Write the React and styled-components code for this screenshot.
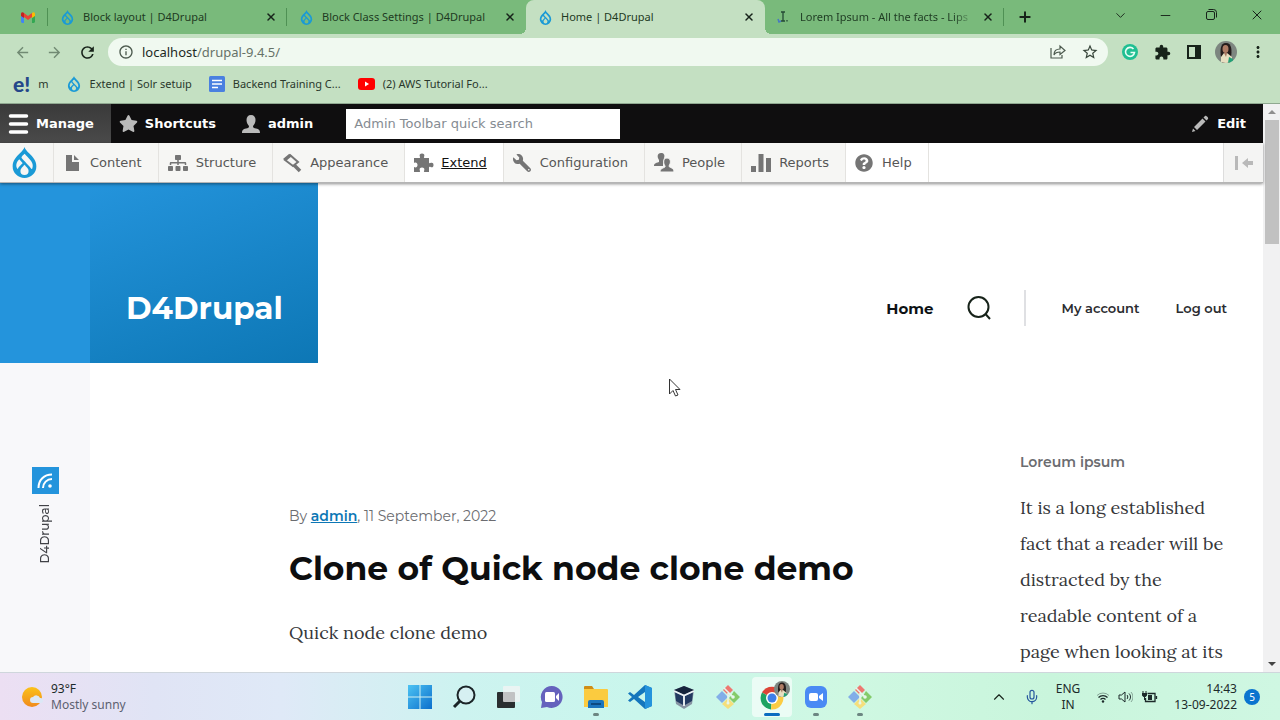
import React from 'react';
import styled, { createGlobalStyle } from 'styled-components';
import { FaStar, FaWrench, FaQuestionCircle, FaSitemap } from 'react-icons/fa';
import { LuX, LuPlus, LuChevronDown, LuMinus, LuChevronUp, LuMic } from 'react-icons/lu';
import { MdExtension, MdMoreVert, MdRefresh, MdArrowBack, MdArrowForward, MdInfoOutline, MdStarBorder } from 'react-icons/md';
import { SiDrupal } from 'react-icons/si';

const ui = '"Segoe UI", "Noto Sans", "Open Sans", sans-serif';
const admin = 'Verdana, "DejaVu Sans", sans-serif';
const heading = 'Metropolis, Montserrat, Inter, sans-serif';
const serif = 'Lora, "Liberation Serif", serif';

const GlobalStyle = createGlobalStyle`
  * {
    box-sizing: border-box;
  }

  body {
    margin: 0;
    background: #fff;
    font-family: ${ui};
  }

  button {
    padding: 0;
    border: 0;
    background: none;
    color: inherit;
    font: inherit;
    cursor: pointer;
  }

  a {
    color: inherit;
    text-decoration: none;
  }

  svg {
    display: block;
    flex-shrink: 0;
  }
`;

const Screen = styled.div`
  display: flex;
  flex-direction: column;
  height: 100vh;
  overflow: hidden;
`;

/* browser frame */

const TabStrip = styled.div`
  display: flex;
  align-items: stretch;
  height: 34px;
  background: #79ba7b;
  color: #1e3a22;
`;

const PinnedTab = styled.button`
  display: flex;
  align-items: center;
  justify-content: flex-end;
  width: 48px;
  padding-right: 12px;
  border-right: 1px solid #4f9154;
  margin: 8px 0;
`;

const Tab = styled.div`
  position: relative;
  display: flex;
  align-items: center;
  flex: 0 1 239px;
  min-width: 0;
  gap: 8px;
  padding: 0 10px 0 12px;
  border-radius: 8px 8px 0 0;
  background: ${(props) => (props.$active ? '#c4e0c2' : 'transparent')};

  &::before,
  &::after {
    content: '';
    display: ${(props) => (props.$active ? 'block' : 'none')};
    position: absolute;
    bottom: 0;
    width: 6px;
    height: 6px;
  }

  &::before {
    right: 100%;
    background: radial-gradient(circle at 0 0, transparent 6px, #c4e0c2 6px);
  }

  &::after {
    left: 100%;
    background: radial-gradient(circle at 100% 0, transparent 6px, #c4e0c2 6px);
  }
`;

const TabTitle = styled.button`
  flex: 1;
  min-width: 0;
  overflow: hidden;
  white-space: nowrap;
  text-align: left;
  font-size: 11px;
  line-height: 18px;
  ${(props) => props.$fade && 'mask-image: linear-gradient(90deg, #000 88%, transparent);'}
`;

const TabLine = styled.span`
  width: 1px;
  margin: 8px 0 8px -1px;
  background: #4f9154;
`;

const IconButton = styled.button`
  display: flex;
  align-items: center;
  justify-content: center;
  color: ${(props) => props.$color || '#17231a'};
`;

const NewTab = styled(IconButton)`
  width: 42px;
`;

const WindowButtons = styled.div`
  display: flex;
  align-items: center;
  gap: 30px;
  margin-left: auto;
  padding: 0 15px 4px 0;
`;

const AddressRow = styled.div`
  display: flex;
  align-items: center;
  height: 36px;
  padding: 0 13px 0 14px;
  background: #c4e0c2;
`;

const NavButtons = styled.div`
  display: flex;
  align-items: center;
  gap: 15px;
  margin-right: 11px;
`;

const AddressBar = styled.div`
  display: flex;
  align-items: center;
  flex: 1;
  height: 28px;
  gap: 8px;
  padding: 0 9px 0 10px;
  border-radius: 14px;
  background: #f0f9f0;
  color: #4c5a4e;
`;

const Url = styled.button`
  flex: 1;
  text-align: left;
  font-size: 13px;
  line-height: 20px;
  color: #667268;

  b {
    color: #1d2a1f;
    font-weight: 400;
  }
`;

const AddressActions = styled.div`
  display: flex;
  align-items: center;
  gap: 15px;
`;

const Extensions = styled.div`
  display: flex;
  align-items: center;
  gap: 14px;
  margin-left: 13px;

  button {
    width: 18px;
  }
`;

const Bookmarks = styled.nav`
  display: flex;
  align-items: center;
  gap: 17px;
  height: 34px;
  padding: 0 13px 6px;
  background: #c4e0c2;
  border-bottom: 1px solid #8fa890;
`;

const Bookmark = styled.a`
  display: flex;
  align-items: center;
  gap: 8px;
  font-size: 11px;
  line-height: 18px;
  color: #2a382c;
`;

const ELogo = styled.b`
  font-family: Lato, sans-serif;
  font-size: 21px;
  font-weight: 900;
  color: #24478a;
`;

/* page and scroll bar */

const Viewport = styled.div`
  display: flex;
  flex: 1;
  min-height: 0;
`;

const Page = styled.div`
  display: flex;
  flex-direction: column;
  flex: 1;
  min-width: 0;
  background: #fff;
`;

const Scrollbar = styled.div`
  display: flex;
  flex-direction: column;
  align-items: center;
  width: 17px;
  padding: 5px 0;
  background: #f1f1f2;
`;

const Thumb = styled.div`
  width: 14px;
  height: 124px;
  margin: 5px 0 auto;
  background: #c1c1c1;
`;

/* admin toolbar */

const AdminBar = styled.div`
  display: flex;
  align-items: center;
  height: 39px;
  flex-shrink: 0;
  background: #0f0e0f;
  color: #fff;
  font-family: ${admin};
`;

const AdminTab = styled.a`
  display: flex;
  align-items: center;
  gap: 7px;
  height: 39px;
  padding: 0 17px 0 8px;
  background: ${(props) => (props.$active ? 'linear-gradient(#3a3a3a, #4a4a4a)' : 'transparent')};
  font-size: 13px;
  font-weight: 700;
`;

const QuickSearch = styled.input`
  width: 274px;
  height: 30px;
  margin-left: 16px;
  padding: 0 8px;
  border: 0;
  border-radius: 0;
  background: #fff;
  font-family: ${admin};
  font-size: 13px;

  &::placeholder {
    color: #858b92;
  }
`;

const EditButton = styled.button`
  display: flex;
  align-items: center;
  gap: 8px;
  margin: 0 17px 0 auto;
  font-size: 13px;
  font-weight: 700;
`;

const Tray = styled.nav`
  position: relative;
  display: flex;
  height: 40px;
  flex-shrink: 0;
  border-bottom: 1px solid #b5b5b5;
  box-shadow: 0 1px 3px rgba(0, 0, 0, 0.45);
  background: #fff;
  font-family: ${admin};
`;

const TrayItem = styled.a`
  display: flex;
  align-items: center;
  gap: ${(props) => props.$gap || 9}px;
  padding: 0 16px 0 9px;
  border-right: 1px solid #e4e3e0;
  background: ${(props) => (props.$active ? '#fff' : '#f6f6f4')};
  color: ${(props) => (props.$current ? '#111' : '#565656')};
  text-decoration: ${(props) => (props.$current ? 'underline' : 'none')};
  font-size: 13px;

  svg {
    color: #757575;
  }
`;

const TrayHome = styled(TrayItem)`
  padding: 0 13px 0 9px;

  svg {
    color: #1a9ad6;
  }
`;

const TrayToggle = styled.button`
  display: flex;
  align-items: center;
  justify-content: center;
  width: 40px;
  margin-left: auto;
  border-left: 1px solid #ddd;
  background: #f4f4f3;
  color: #b9b9b9;
`;

/* site */

const Site = styled.div`
  display: flex;
  flex: 1;
  min-height: 0;
  overflow: hidden;
`;

const Social = styled.aside`
  display: flex;
  flex-direction: column;
  align-items: center;
  width: 90px;
  background: #f8f8fa;
`;

const SocialTop = styled.div`
  width: 100%;
  height: 180px;
  background: #2494dc;
`;

const Feed = styled.a`
  display: flex;
  align-items: center;
  justify-content: center;
  width: 27px;
  height: 27px;
  margin: 104px 0 10px;
  background: #2494dc;
  color: #fff;
`;

const SocialName = styled.span`
  writing-mode: vertical-rl;
  transform: rotate(180deg);
  font-family: ${heading};
  font-size: 12px;
  font-weight: 500;
  line-height: 16px;
  color: #414247;
`;

const Main = styled.main`
  flex: 1;
  min-width: 0;
`;

const SiteHeader = styled.header`
  display: flex;
  align-items: stretch;
  justify-content: space-between;
  height: 180px;
  padding-right: 36px;
  font-family: ${heading};
`;

const Branding = styled.a`
  display: flex;
  align-items: flex-end;
  width: 228px;
  padding: 0 0 35px 36px;
  background: linear-gradient(160deg, #2494dc, #0d77b5);
  color: #fff;
  font-size: 31px;
  font-weight: 700;
  line-height: 40px;
`;

const SiteNav = styled.nav`
  display: flex;
  align-items: center;
  align-self: flex-end;
  height: 36px;
  margin-bottom: 37px;
  font-size: 13px;
  font-weight: 600;
  color: #2b2c30;
`;

const NavLink = styled.a`
  margin-left: 36px;
`;

const HomeLink = styled.a`
  font-size: 15px;
  font-weight: 700;
  color: #0d1114;
`;

const SearchButton = styled(IconButton)`
  margin: 0 33px;
`;

const Divider = styled.span`
  width: 2px;
  height: 36px;
  background: #dfe0e3;
`;

const Content = styled.div`
  display: flex;
  justify-content: space-between;
  padding: 81px 33px 0 199px;
`;

const Article = styled.article`
  padding-top: 60px;
`;

const Meta = styled.p`
  margin: 0;
  font-family: ${heading};
  font-size: 14px;
  line-height: 24px;
  color: #6b6c70;

  a {
    font-weight: 600;
    color: #0d77b5;
    text-decoration: underline;
  }
`;

const Title = styled.h1`
  margin: 17px 0 0;
  font-family: ${heading};
  font-size: 33px;
  font-weight: 700;
  line-height: 46px;
  color: #0d0e0f;
`;

const Body = styled.p`
  margin: 24px 0 0;
  font-family: ${serif};
  font-size: 18px;
  line-height: 36px;
  color: #36373a;
`;

const Sidebar = styled.aside`
  width: 210px;
`;

const BlockTitle = styled.h2`
  margin: 6px 0 16px;
  font-family: ${heading};
  font-size: 14px;
  font-weight: 600;
  line-height: 24px;
  color: #6b6c70;
`;

const BlockText = styled(Body)`
  margin: 0;
`;

/* task bar */

const Taskbar = styled.footer`
  display: grid;
  grid-template-columns: 1fr auto 1fr;
  align-items: center;
  height: 48px;
  flex-shrink: 0;
  border-top: 1px solid #cfd6dc;
  background: linear-gradient(90deg, #ecdff3 0%, #e0e4f5 12%, #dfe9f7 22%, #cdf3f0 36%, #c9f6ec 50%, #cff8e2 66%, #c9f5dc 82%, #cff7e2 100%);
  color: #1c2a2a;
  font-size: 12px;
  line-height: 16px;
`;

const Line = styled.span`
  display: block;
  color: ${(props) => (props.$soft ? '#5c6070' : 'inherit')};
`;

const Weather = styled.button`
  display: flex;
  align-items: center;
  gap: 8px;
  padding-left: 21px;
  text-align: left;
`;

const Apps = styled.div`
  display: flex;
  align-items: center;
  gap: 4px;
`;

const AppButton = styled.button`
  position: relative;
  display: flex;
  align-items: center;
  justify-content: center;
  width: 40px;
  height: 40px;
  border-radius: 4px;
  background: ${(props) => (props.$active ? 'rgba(255, 255, 255, 0.6)' : 'transparent')};

  &::after {
    content: '';
    display: ${(props) => (props.$running || props.$active ? 'block' : 'none')};
    position: absolute;
    bottom: 1px;
    width: ${(props) => (props.$active ? 16 : 6)}px;
    height: 3px;
    border-radius: 2px;
    background: ${(props) => (props.$active ? '#0a6cc0' : '#6c8681')};
  }
`;

const TrayIcons = styled.div`
  display: flex;
  align-items: center;
  justify-content: flex-end;
  gap: 16px;
  padding-right: 20px;
`;

const Status = styled.button`
  display: flex;
  align-items: center;
  gap: 8px;
`;

const Clock = styled.button`
  display: flex;
  align-items: center;
  gap: 7px;
  text-align: right;
`;

const Count = styled.span`
  display: flex;
  align-items: center;
  justify-content: center;
  width: 16px;
  height: 16px;
  border-radius: 50%;
  background: #0a74cf;
  color: #fff;
  font-size: 10px;
`;

const Pointer = styled.svg`
  position: fixed;
  left: 668px;
  top: 378px;
`;

const GitIcon = () => (
  <svg width="24" height="24" viewBox="0 0 24 24">
    <path d="m12 0 5 5-5 5-5-5z" fill="#ee7770" />
    <path d="m18 6 6 6-6 6-5-5 2-2z" fill="#84cb6b" />
    <path d="m6 6 6 6-6 6-6-6z" fill="#82aee8" />
    <path d="m12 13 6 6-6 5-6-5z" fill="#f5df7c" />
    <path d="m8 3 9 9m-5-4v10" stroke="#e8f6ec" strokeWidth="1.500" />
    <circle cx="17" cy="12" r="1.800" fill="#e8f6ec" />
    <circle cx="12" cy="18" r="1.500" fill="#e8f6ec" />
  </svg>
);

const Portrait = ({ size }) => (
  <svg width={size} height={size} viewBox="0 0 22 22">
    <clipPath id={'face' + size}>
      <circle cx="11" cy="11" r="11" />
    </clipPath>
    <g clipPath={`url(#face${size})`}>
      <path d="M0 0h22v22H0z" fill="#7d8680" />
      <path d="M6 16c-1-6-1-14 5-14s6 8 5 14l-1 6H7z" fill="#241d1c" />
      <ellipse cx="10.500" cy="8" rx="3" ry="4" fill="#ae7c65" />
      <path d="m6 16 3-4h3l5 4v6H6z" fill="#e7dfc1" />
      <path d="m14 16 4 2v4h-5z" fill="#21a176" />
      <path d="m9 12 2 4 1-4z" fill="#a77560" />
    </g>
  </svg>
);

const Person = ({ color = '#bababa' }) => (
  <svg width="20" height="20" viewBox="0 0 20 20">
    <path d="M10 1c3 0 4.500 2 4.500 5S13 11 12 12c0 2 1 2 3 2.500 3 .8 4 1.500 4 4.500H1c0-3 1-3.700 4-4.500 2-.5 3-.5 3-2.500-1-1-2.500-3-2.500-6S7 1 10 1z" fill={color} />
  </svg>
);

const tabs = [
  { title: 'Block layout | D4Drupal' },
  { title: 'Block Class Settings | D4Drupal' },
  { title: 'Home | D4Drupal', active: true },
  { title: 'Lorem Ipsum - All the facts - Lips', lorem: true },
];

const trayItems = [
  {
    label: 'Content',
    icon: (
      <svg width="18" height="18" viewBox="0 0 18 18">
        <path d="M3 1h6v7h7v9H3zM11 1l5 5h-5z" fill="currentColor" />
      </svg>
    ),
  },
  { label: 'Structure', gap: 8, icon: <FaSitemap size={20} /> },
  {
    label: 'Appearance',
    gap: 8,
    icon: (
      <svg width="20" height="20" viewBox="0 0 20 20">
        <path d="m8 2 8 7-5 4-8-6z" fill="none" stroke="currentColor" strokeWidth="2" />
        <path d="M1 6 7 1l3 2-6 5z" fill="currentColor" />
        <path d="m12 12 6 6" stroke="currentColor" strokeWidth="3.500" />
      </svg>
    ),
  },
  {
    label: 'Extend',
    gap: 7,
    active: true,
    current: true,
    icon: (
      <svg width="20" height="20" viewBox="0 0 20 20">
        <path
          d="M0 5h5.500c1 0 .5-1 .2-2C5.300 1.500 6.200.5 8 .5s2.700 1 2.300 2.500c-.3 1-.8 2 .2 2H15v4.500c0 1 1 .6 2 .3 1.500-.5 2.500.4 2.500 2.200s-1 2.700-2.500 2.200c-1-.3-2-.7-2 .3V19h-4.500c-1 0-.5-1-.2-2 .4-1.500-.5-2.500-2.300-2.500s-2.700 1-2.300 2.500c.3 1 .8 2-.2 2H0v-5c2 1 3.500 0 3.500-2S2 9 0 10z"
          fill="currentColor"
        />
      </svg>
    ),
  },
  { label: 'Configuration', gap: 9, icon: <FaWrench size={18} transform="scale(-1 1)" /> },
  {
    label: 'People',
    gap: 8,
    icon: (
      <svg width="20" height="20" viewBox="0 0 20 20">
        <path d="M7 0c3 0 4 2 3 5l-1 4v4H0c0-2 1-3 5-4V7C3 4 3 0 7 0z" fill="currentColor" />
        <path d="M13 5c3 0 4 3 3 6l-1 2c0 2 5 1 5 6H6c0-4 4-4 5-5v-1c-2-3-2-8 2-8z" fill="currentColor" stroke="#f6f6f4" />
      </svg>
    ),
  },
  {
    label: 'Reports',
    gap: 8,
    icon: (
      <svg width="20" height="18" viewBox="0 0 20 18">
        <path d="M0 12h5v6H0zM7.500 0h5v18h-5zM15 4h5v14h-5z" fill="currentColor" />
      </svg>
    ),
  },
  { label: 'Help', active: true, icon: <FaQuestionCircle size={18} /> },
];

const BrowserFrame = () => (
  <>
    <TabStrip>
      <PinnedTab aria-label="Mail">
        <svg width="14" height="11" viewBox="0 0 14 11">
          <path d="M0 2v8l1 1h2V4z" fill="#4285f4" />
          <path d="M14 2v8l-1 1h-2V4z" fill="#34a853" />
          <path d="M11 1v5l3-2V2c0-2-2-2-3-1z" fill="#fbbc04" />
          <path d="M3 1 7 4l4-3v4L7 8 3 5z" fill="#ea4335" />
          <path d="M3 1v5L0 4V2c0-2 2-2 3-1z" fill="#c5221f" />
        </svg>
      </PinnedTab>
      {tabs.map((tab, i) => (
        <React.Fragment key={i}>
          {i === 1 && <TabLine />}
          <Tab $active={tab.active}>
            {tab.lorem ? (
              <svg width="15" height="14" viewBox="0 0 15 14">
                <path d="M4 2h4M6 2v9M4 11h4M10 10v1.500" stroke="#244a35" strokeWidth="1.300" />
                <path d="m1 9 1 3 2-1" stroke="#4777c4" strokeWidth="1.500" fill="none" />
              </svg>
            ) : (
              <SiDrupal size={15} color="#1a9ad6" />
            )}
            <TabTitle $fade={tab.lorem}>{tab.title}</TabTitle>
            <IconButton aria-label="Close tab">
              <LuX size={12} strokeWidth={3} />
            </IconButton>
          </Tab>
        </React.Fragment>
      ))}
      <TabLine />
      <NewTab aria-label="New tab">
        <LuPlus size={16} strokeWidth={3} />
      </NewTab>
      <WindowButtons>
        <IconButton aria-label="Search tabs"><LuChevronDown size={15} strokeWidth={1.5} /></IconButton>
        <IconButton aria-label="Minimize"><LuMinus size={15} strokeWidth={1.5} /></IconButton>
        <IconButton aria-label="Restore">
          <svg width="16" height="12" viewBox="0 0 16 12" fill="none" stroke="currentColor">
            <rect x="3.500" y="2.500" width="8" height="8" rx="1.500" />
            <path d="M5.500.5h5a3 3 0 0 1 3 3v5" />
          </svg>
        </IconButton>
        <IconButton aria-label="Close"><LuX size={16} strokeWidth={1.5} /></IconButton>
      </WindowButtons>
    </TabStrip>
    <AddressRow>
      <NavButtons>
        <IconButton aria-label="Back" $color="#718a73"><MdArrowBack size={17} /></IconButton>
        <IconButton aria-label="Forward" $color="#718a73"><MdArrowForward size={17} /></IconButton>
        <IconButton aria-label="Reload"><MdRefresh size={19} /></IconButton>
      </NavButtons>
      <AddressBar>
        <MdInfoOutline size={16} />
        <Url><b>localhost</b>/drupal-9.4.5/</Url>
        <AddressActions>
          <IconButton aria-label="Share" $color="#4c5a4e">
            <svg width="16" height="16" viewBox="0 0 16 16" fill="none" stroke="currentColor" strokeWidth="1.200">
              <path d="M1 4v10h11v-3" />
              <path d="M4 11c0-4 2-6 6-6V2l5 4.500-5 4V8c-3 0-5 1-6 3z" />
            </svg>
          </IconButton>
          <IconButton aria-label="Bookmark" $color="#37453a"><MdStarBorder size={18} /></IconButton>
        </AddressActions>
      </AddressBar>
      <Extensions>
        <IconButton aria-label="Grammar">
          <svg width="18" height="18" viewBox="0 0 18 18" fill="none" stroke="#e9fff6" strokeWidth="1.600">
            <circle cx="9" cy="9" r="8" fill="#1fbf92" stroke="none" />
            <path d="M12.500 6A4.500 4.500 0 1 0 13.500 9.500H9.500" />
          </svg>
        </IconButton>
        <IconButton aria-label="Extensions"><MdExtension size={17} /></IconButton>
        <IconButton aria-label="Side panel">
          <svg width="18" height="16" viewBox="0 0 18 16">
            <path d="M2 1h14v14H2zm2 2v10h6V3z" fill="currentColor" fillRule="evenodd" />
          </svg>
        </IconButton>
        <IconButton aria-label="Profile"><Portrait size={22} /></IconButton>
        <IconButton aria-label="Menu"><MdMoreVert size={18} /></IconButton>
      </Extensions>
    </AddressRow>
    <Bookmarks>
      <Bookmark href="#"><ELogo>e!</ELogo>m</Bookmark>
      <Bookmark href="#"><SiDrupal size={16} color="#1a9ad6" />Extend | Solr setuip</Bookmark>
      <Bookmark href="#">
        <svg width="16" height="16" viewBox="0 0 16 16">
          <rect width="16" height="16" rx="1.500" fill="#4a80e0" />
          <path d="M3 4.500h10M3 8h10M3 11.500h6" stroke="#fff" strokeWidth="1.600" />
        </svg>
        Backend Training C...
      </Bookmark>
      <Bookmark href="#">
        <svg width="17" height="12" viewBox="0 0 17 12">
          <rect width="17" height="12" rx="3" fill="#f00" />
          <path d="m7 3.500 4 2.500-4 2.500z" fill="#fff" />
        </svg>
        (2) AWS Tutorial Fo...
      </Bookmark>
    </Bookmarks>
  </>
);

const AdminToolbar = () => (
  <>
    <AdminBar>
      <AdminTab href="#" $active>
        <svg width="21" height="20" viewBox="0 0 21 20">
          <path d="M2.500 2h16M2.500 10h16M2.500 18h16" stroke="#fff" strokeWidth="3.500" strokeLinecap="round" />
        </svg>
        Manage
      </AdminTab>
      <AdminTab href="#"><FaStar size={19} color="#bababa" />Shortcuts</AdminTab>
      <AdminTab href="#"><Person />admin</AdminTab>
      <QuickSearch type="search" aria-label="Admin Toolbar quick search" placeholder="Admin Toolbar quick search" />
      <EditButton>
        <svg width="18" height="18" viewBox="0 0 18 18" fill="#bababa">
          <path d="m12.500 2.500 1.500-1.500c1-1 4 2 3 3L15.500 5.500zM11.500 3.500l3 3L6 15l-3-3zM2 13.500 4.500 16 1 17z" />
        </svg>
        Edit
      </EditButton>
    </AdminBar>
    <Tray>
      <TrayHome href="#" aria-label="Drupal"><SiDrupal size={31} /></TrayHome>
      {trayItems.map((item) => (
        <TrayItem key={item.label} href="#" $active={item.active} $current={item.current} $gap={item.gap}>
          {item.icon}
          {item.label}
        </TrayItem>
      ))}
      <TrayToggle aria-label="Vertical orientation">
        <svg width="20" height="16" viewBox="0 0 20 16" fill="currentColor">
          <path d="M1 1h3v14H1zM8 8l6-5v3h5v4h-5v3z" />
        </svg>
      </TrayToggle>
    </Tray>
  </>
);

const SitePage = () => (
  <Site>
    <Social>
      <SocialTop />
      <Feed href="#" aria-label="RSS feed">
        <svg width="16" height="16" viewBox="0 0 16 16" fill="none" stroke="currentColor" strokeWidth="2">
          <path d="M1.500 15C1.500 7 7 1.500 15 1.500M6 15c0-5 4-9 9-9" />
          <circle cx="13" cy="13" r="1.800" fill="currentColor" stroke="none" />
        </svg>
      </Feed>
      <SocialName>D4Drupal</SocialName>
    </Social>
    <Main>
      <SiteHeader>
        <Branding href="#">D4Drupal</Branding>
        <SiteNav>
          <HomeLink href="#">Home</HomeLink>
          <SearchButton aria-label="Search">
            <svg width="24" height="24" viewBox="0 0 24 24" fill="none" stroke="currentColor" strokeWidth="2">
              <circle cx="11.500" cy="11" r="10" />
              <path d="m18 17.500 5 5.500" />
            </svg>
          </SearchButton>
          <Divider />
          <NavLink href="#">My account</NavLink>
          <NavLink href="#">Log out</NavLink>
        </SiteNav>
      </SiteHeader>
      <Content>
        <Article>
          <Meta>By <a href="#">admin</a>, 11 September, 2022</Meta>
          <Title>Clone of Quick node clone demo</Title>
          <Body>Quick node clone demo</Body>
        </Article>
        <Sidebar>
          <BlockTitle>Loreum ipsum</BlockTitle>
          <BlockText>
            It is a long established fact that a reader will be distracted by the readable content of a page when looking at its
          </BlockText>
        </Sidebar>
      </Content>
    </Main>
  </Site>
);

const WindowsTaskbar = () => (
  <Taskbar>
    <Weather>
      <svg width="22" height="22" viewBox="0 0 22 22">
        <defs>
          <linearGradient id="sun" x1="0" y1="0" x2="0" y2="1">
            <stop offset="0" stopColor="#fbc21a" />
            <stop offset="1" stopColor="#f08a1c" />
          </linearGradient>
        </defs>
        <circle cx="11" cy="11" r="10" fill="url(#sun)" />
        <path d="M12 17a3 3 0 0 1 0-6 4 4 0 0 1 7 1 2.500 2.500 0 0 1 1 5z" fill="#dce8f6" />
      </svg>
      <span>
        <Line>93°F</Line>
        <Line $soft>Mostly sunny</Line>
      </span>
    </Weather>
    <Apps>
      <AppButton aria-label="Start">
        <svg width="24" height="24" viewBox="0 0 24 24">
          <linearGradient id="win" x1="0" y1="0" x2="1" y2="1">
            <stop offset="0" stopColor="#4cc3f3" />
            <stop offset="1" stopColor="#0c6fcc" />
          </linearGradient>
          <path d="M0 0h11.500v11.500H0zM12.500 0H24v11.500H12.500zM0 12.500h11.500V24H0zM12.500 12.500H24V24H12.500z" fill="url(#win)" />
        </svg>
      </AppButton>
      <AppButton aria-label="Search">
        <svg width="24" height="24" viewBox="0 0 24 24" fill="none" stroke="#1b2528">
          <circle cx="14" cy="10" r="8.500" strokeWidth="2" fill="#d6f0f2" />
          <path d="m8 16-6 6" strokeWidth="3" />
        </svg>
      </AppButton>
      <AppButton aria-label="Task view">
        <svg width="24" height="24" viewBox="0 0 24 24">
          <rect x="1" y="7" width="18" height="16" rx="1" fill="#2a2e30" />
          <rect x="7" y="1" width="17" height="16" rx="1" fill="#f4f4f4" opacity=".75" />
        </svg>
      </AppButton>
      <AppButton aria-label="Chat">
        <svg width="24" height="24" viewBox="0 0 24 24">
          <path d="M12 1a11 11 0 1 1-5 21l-6 1 1-6A11 11 0 0 1 12 1z" fill="#6562bd" />
          <rect x="5" y="7" width="10" height="10" rx="1.500" fill="#fff" />
          <path d="m16 11 3-3v8l-3-3z" fill="#fff" />
        </svg>
      </AppButton>
      <AppButton aria-label="File Explorer" $running>
        <svg width="26" height="24" viewBox="0 0 26 24">
          <path d="M1 2a1 1 0 0 1 1-1h7l2 3H1z" fill="#cf8d16" />
          <path d="M1 4h23a1 1 0 0 1 1 1v17H1z" fill="#fbcb3f" />
          <path d="M5 23v-6a2 2 0 0 1 2-2h12a2 2 0 0 1 2 2v6z" fill="#1c75bd" />
          <path d="M8 19h10" stroke="#0c4a81" strokeWidth="2" />
        </svg>
      </AppButton>
      <AppButton aria-label="Code">
        <svg width="24" height="24" viewBox="0 0 24 24">
          <path d="m17 0 7 3v18l-7 3L6 14l-4 3-2-1.500L4 12 0 8.500 2 7l4 3zm0 7-7 5 7 5z" fill="#1476bd" fillRule="evenodd" />
          <path d="m17 0 7 3v18l-7 3z" fill="#2493dc" />
        </svg>
      </AppButton>
      <AppButton aria-label="VirtualBox">
        <svg width="22" height="24" viewBox="0 0 22 24">
          <path d="m11 1 10 4-2 14-8 5-8-5L1 5z" fill="#8794a3" />
          <path d="m11 1 10 4-10 5L1 5z" fill="#16243c" />
          <path d="m2 7 8 4v9l-7-4zM20 7l-8 4v9l7-4z" fill="#233a61" />
          <path d="m1 6 10 4.500L21 6M11 10.500V21" stroke="#eef3f6" strokeWidth="1.800" fill="none" />
        </svg>
      </AppButton>
      <AppButton aria-label="Git"><GitIcon /></AppButton>
      <AppButton aria-label="Chrome" $active>
        <svg width="36" height="32" viewBox="0 0 36 32">
          <path d="M18 17 8 11.500A11.500 11.500 0 0 1 28 11.500z" fill="#dc4437" />
          <path d="M18 17 8 11.500A11.500 11.500 0 0 0 17 28.500z" fill="#1da362" />
          <path d="M18 17 17 28.500A11.500 11.500 0 0 0 28 11.500H18z" fill="#fccc44" />
          <circle cx="18" cy="17" r="6" fill="#fff" />
          <circle cx="18" cy="17" r="4.500" fill="#3f7fe8" />
          <g transform="translate(20 0)">
            <Portrait size={16} />
          </g>
        </svg>
      </AppButton>
      <AppButton aria-label="Zoom" $running>
        <svg width="24" height="24" viewBox="0 0 24 24">
          <rect x="1" y="1" width="22" height="22" rx="6" fill="#4a8af4" />
          <rect x="5" y="8" width="9" height="8" rx="2" fill="#fff" />
          <path d="m15 11 4-3v8l-4-3z" fill="#fff" />
        </svg>
      </AppButton>
      <AppButton aria-label="Git Bash" $running><GitIcon /></AppButton>
    </Apps>
    <TrayIcons>
      <IconButton aria-label="Hidden icons"><LuChevronUp size={18} strokeWidth={1.5} /></IconButton>
      <IconButton aria-label="Microphone" $color="#27589e"><LuMic size={16} strokeWidth={1.8} /></IconButton>
      <button>
        <Line>ENG</Line>
        <Line>IN</Line>
      </button>
      <Status aria-label="Network, sound and battery">
        <svg width="14" height="14" viewBox="0 0 14 14" fill="none" stroke="currentColor">
          <path d="M1 5.500a8.500 8.500 0 0 1 12 0" opacity=".4" />
          <path d="M2.500 7.500a6.400 6.400 0 0 1 9 0M4.500 9.500a3.500 3.500 0 0 1 5 0" strokeWidth="1.300" />
          <circle cx="7" cy="11.500" r="1.200" fill="currentColor" stroke="none" />
        </svg>
        <svg width="15" height="14" viewBox="0 0 15 14" fill="none" stroke="currentColor">
          <path d="M1 5h2.500L7 2v10L3.500 9H1zM9 5c1 1 1 3 0 4M11 3.500c2 2 2 5 0 7" />
          <path d="M13 2c2.500 3 2.500 7 0 10" opacity=".4" />
        </svg>
        <svg width="17" height="14" viewBox="0 0 17 14" fill="none" stroke="currentColor">
          <path d="M6.500 3.500H14v8H4.500V8M15.500 6v3" strokeWidth="1.300" />
          <path d="M7 5h4v5H7zM1 3h5v2.500L4.500 7h-2L1 5.500z" fill="currentColor" stroke="none" />
          <path d="M2 1v2M5 1v2M3.500 7v3" />
        </svg>
      </Status>
      <Clock>
        <span>
          <Line>14:43</Line>
          <Line>13-09-2022</Line>
        </span>
        <Count>5</Count>
      </Clock>
    </TrayIcons>
  </Taskbar>
);

const App = () => (
  <Screen>
    <GlobalStyle />
    <BrowserFrame />
    <Viewport>
      <Page>
        <AdminToolbar />
        <SitePage />
      </Page>
      <Scrollbar>
        <svg width="8" height="6" viewBox="0 0 8 6"><path d="m0 5 4-4 4 4z" fill="#8f8f8f" /></svg>
        <Thumb />
        <svg width="8" height="6" viewBox="0 0 8 6"><path d="m0 1 4 4 4-4z" fill="#444" /></svg>
      </Scrollbar>
    </Viewport>
    <WindowsTaskbar />
    <Pointer width="14" height="20" viewBox="0 0 14 20">
      <path d="M1.500 1v15l3.500-3.500 2.500 5.500 2.500-1-2.500-5.500h4.500z" fill="#fff" stroke="#333" />
    </Pointer>
  </Screen>
);

export default App;
